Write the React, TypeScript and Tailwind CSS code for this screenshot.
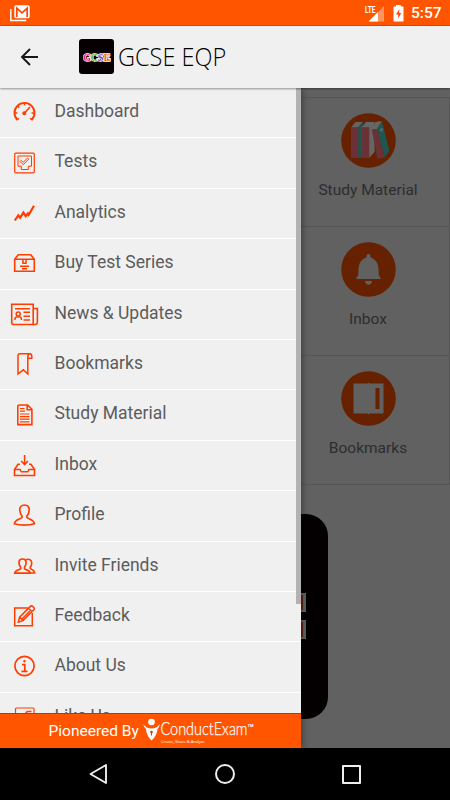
import { ReactNode } from "react";

const menuItems: { label: string; icon: ReactNode }[] = [
  {
    label: "Dashboard",
    icon: (
      <>
        <path d="M7.500 23 A10 10 0 1 1 21.500 23" strokeWidth="1.900" />
        <path d="M7 23l2-1.7M22 23l-2-1.7M4.8 16h2.6M21.6 16h2.6M7.5 9l1.8 1.8M14.5 6v2.5" />
        <path d="M14.5 16l5.5-6" strokeWidth="1.6" />
        <circle cx="14.3" cy="16.2" r="1.3" fill="currentColor" />
      </>
    ),
  },
  {
    label: "Tests",
    icon: (
      <>
        <rect x="4.7" y="5.2" width="19.6" height="19.6" rx="1" strokeWidth="1.2" />
        <path d="M8 18.2V8h13.5v10.2h-3.2v3.3h-7v-3.3z" strokeWidth="1" />
        <path d="M10 13.5l1.2-1.2 2 2 4.3-4.3 1.2 1.2-5.5 5.5z" strokeWidth="1" />
      </>
    ),
  },
  {
    label: "Analytics",
    icon: <path d="M4.8 22.5l3.5-5.2 1.8 2.5 3.3-5.2 2.3 3.6 2.2-2.7.8 1.3 5.3-9" strokeWidth="2.2" />,
  },
  {
    label: "Buy Test Series",
    icon: (
      <>
        <path d="M4.7 11.2l3.6-4.5h12.4l3.6 4.5v12H4.7zM4.7 11.2h19.6" strokeWidth="1.6" />
        <path d="M13 11.2v4h3v-4M10 18.3h9M12 20.8h5" strokeWidth="1.5" />
      </>
    ),
  },
  {
    label: "News & Updates",
    icon: (
      <>
        <path d="M1.7 5.3h21.5v20.2H3.7a2 2 0 0 1-2-2z" strokeWidth="1.6" />
        <path d="M23.2 9.5h4.2v13.5a2.3 2.3 0 0 1-2.3 2.5h-2" strokeWidth="1.6" />
        <path d="M5 9.7h15M13.5 13.3H20M13.5 17.3H20M13.5 21H20M5 21v-1.2q0-2 3.2-2t3.2 2V21" />
        <circle cx="8.2" cy="15" r="2" />
      </>
    ),
  },
  {
    label: "Bookmarks",
    icon: (
      <>
        <path d="M9.8 4.8h10.5q-2.5 0-2.5 3V25l-4.5-4.2L8 25V7q0-2.2 1.8-2.2z" />
        <path d="M20 4.8q1.8.2 1.8 2.6v1.8h-4" />
      </>
    ),
  },
  {
    label: "Study Material",
    icon: (
      <>
        <path d="M9.2 5h8.5l4.2 4.3V24.6H7.8V6.4q0-1.4 1.4-1.4zM17.2 5v4.8h4.7" strokeWidth="1.600" />
        <path d="M10 8.5h4.5M10 11.2h5M10 14h9.5M10 16.6h9.5M10 19.2h9.5M10 21.8h9.5" strokeWidth="1.2" />
      </>
    ),
  },
  {
    label: "Inbox",
    icon: (
      <>
        <path d="M14.6 5v9M11.2 11l3.4 3.5 3.4-3.5" strokeWidth="1.6" />
        <path d="M10 14.2H8l-3.5 5.3v6h20v-6L21 14.2h-2" strokeWidth="1.6" />
        <path d="M4.7 19.4h5.4l1.2 2.4h6.5l1.1-2.4h5.5" />
      </>
    ),
  },
  {
    label: "Profile",
    icon: (
      <path
        d="M14.6 5c-3.200 0-5.200 2.2-4.800 5.2.2 3 1.4 5 2.2 5.8v1.5c-1.7 1.8-7.3 1.8-7.6 6.3 5 1.8 15 1.8 20 0-.3-4.500-5.8-4.500-7.5-6.300V16c1.2-1.2 2.2-3.5 2.3-6 .2-3-1.6-5-4.600-5z"
        strokeWidth="1.7"
      />
    ),
  },
  {
    label: "Invite Friends",
    icon: (
      <>
        <path
          d="M12.5 8c-2.6 0-3.8 1.6-3.5 4 .1 2 .8 3.2 1.6 4v1.8c-1.5 1.2-5.6 1.2-5.9 4.4h15.6c-.3-3.2-4.3-3.2-5.8-4.4V16c1-1 1.5-2.3 1.6-4 .2-2.4-1-4-3.6-4z"
          strokeWidth="1.7"
        />
        <path d="M16 8.8c3-1.5 6 .3 5.7 3.4-.1 1.8-.6 3-1.4 3.9v1.6c1.4 1 4.2 1 4.4 4.3h-4.4" strokeWidth="1.6" />
      </>
    ),
  },
  {
    label: "Feedback",
    icon: (
      <>
        <path d="M18 7H4.7v17.8h17.6V12" />
        <path d="M8.3 21.2l1.3-5L20.4 5.4q1-1 2.2 0l1.3 1.3q1 1 0 2L13 19.6zM9.6 16.3l3.3 3.2M18.6 7.3l3.5 3.4M12 18l8-8" />
      </>
    ),
  },
  {
    label: "About Us",
    icon: (
      <>
        <circle cx="14.5" cy="15" r="9.6" strokeWidth="1.7" />
        <circle cx="14.5" cy="10.2" r=".9" fill="currentColor" strokeWidth=".8" />
        <path d="M12 13.6h2.8v6.3M11.5 20.3h6" strokeWidth="1.7" />
      </>
    ),
  },
  {
    label: "Like Us",
    icon: (
      <>
        <rect x="5.500" y="6" width="18.500" height="18" rx="1" strokeWidth="1.2" />
        <path d="M21.500 9.5h-3q-2.500 0-2.500 2V24M14 15h6" />
      </>
    ),
  },
];

const tiles: { label: string; icon: ReactNode }[] = [
  {
    label: "Study Material",
    icon: (
      <>
        <path d="M10 14.500l4.500-5.500h7.500l-5 5.500z" fill="#646464" />
        <path d="M10 14.500h7.300v30.500H10z" fill="#6a3236" />
        <path d="M17.300 14.500l4.700-5.500v35l-4.700 1z" fill="#1d5652" />
        <path d="M20.500 14.500L25 9h8.500v30l-5.500 6V14.500z" fill="#666" />
        <path d="M20.500 14.500h7.800V45h-7.800z" fill="#6a3236" />
        <path d="M36 16l4.800-8 7.500 29.500-4.600 7z" fill="#1d5652" />
        <path d="M30.700 16.500L34.500 9l6.300-1L36 16z" fill="#666" />
        <path d="M30.700 16.500L36 16l7.700 28.500-7.200 1.500z" fill="#6a3236" />
        <path d="M39 18l1.500-3M40.500 18.500l1.300-3" stroke="#6c7c7a" strokeWidth=".9" />
      </>
    ),
  },
  {
    label: "Inbox",
    icon: (
      <>
        <path
          d="M25.5 14a2 2 0 0 1 4 0v1.5c5.5 1.5 7.8 6.5 8 11.5l.3 6.5 1.6 1.8v1.7H15.5v-1.7l1.7-1.8.3-6.5c.2-5 2.5-10 8-11.5z"
          fill="#616161"
        />
        <path d="M24 39h7q-.5 3.8-3.5 3.8T24 39z" fill="#616161" />
      </>
    ),
  },
  {
    label: "Bookmarks",
    icon: (
      <>
        <path d="M12.5 12.5h14l1-1 1 1h14v30h-14l-1 1-1-1h-14z" fill="#616161" />
        <path d="M34.5 17h4v21h-4z" fill="#662200" />
      </>
    ),
  },
];

function StatusBar() {
  return (
    <div className="flex h-[26px] shrink-0 items-center border-b border-[#ef3f00] bg-[#ff5500] text-white">
      <svg className="ml-[10px] h-[18px] w-5" viewBox="0 0 20 18" fill="none" stroke="currentColor" strokeWidth="1.4">
        <path d="M.8 5v11.5h15.4" />
        <rect x="5" y="2" width="14" height="11.5" rx="1" fill="white" />
        <path d="M6.8 13V4.2l5.2 4.6 5.2-4.6V13" stroke="#ff4600" strokeWidth="1.7" />
      </svg>
      <svg className="ml-[334px] h-[18px] w-[20px]" viewBox="0 0 20 18">
        <path d="M20 2v15.500H5z" fill="#ff9563" />
        <path d="M14 8v9.500H4.500z" fill="white" />
        <text x="1" y="8.500" fill="white" fontFamily="Roboto" fontWeight="700" fontSize="8.500" textLength="10.500" lengthAdjust="spacingAndGlyphs">
          LTE
        </text>
      </svg>
      <svg className="ml-[9px] h-[18px] w-[11px]" viewBox="0 0 11 18">
        <path d="M3 1h5v1.500h2q.5 0 .5.500v14.500H.5V3q0-.5.5-.5h2z" fill="white" />
        <path d="M6.500 5L3 10.500h2.200v4L8.300 9H6z" fill="#ff4600" />
      </svg>
      <span className="relative top-px ml-[7px] text-[15.500px] leading-none font-medium">5:57</span>
    </div>
  );
}

function Header() {
  return (
    <header className="relative z-20 flex h-[62px] shrink-0 items-center bg-[#f0f0f0] pb-px shadow-[0_1px_2px_rgba(0,0,0,0.4)]">
      <svg className="ml-5 h-5 w-5" viewBox="0 0 20 20" fill="none" stroke="#171717" strokeWidth="1.900">
        <path d="M18 10H2M10 2L2 10l8 8" />
      </svg>
      <div className="ml-[39px] flex h-[35px] w-[35px] items-center justify-center rounded-[3px] bg-[#070002]">
        <svg className="h-3 w-7" viewBox="0 0 28 12" fontFamily="Liberation Serif" fontWeight="700" fontSize="10.500" stroke="white" strokeWidth="1.400" paintOrder="stroke">
          <text x="0" y="9.500" fill="#ef1683">G</text>
          <text x="7.500" y="9.500" fill="#62b52e">C</text>
          <text x="14.700" y="9.500" fill="#8c3caa">S</text>
          <text x="20.500" y="9.500" fill="#f36b28">E</text>
        </svg>
      </div>
      <h1 className="ml-1 origin-left scale-x-[0.94] text-[25px] leading-none font-light whitespace-nowrap text-black [font-family:'Open_Sans',sans-serif]">
        GCSE EQP
      </h1>
    </header>
  );
}

function Drawer() {
  return (
    <aside className="relative z-10 flex h-full w-[301px] shrink-0 flex-col bg-[#f0f0f0] shadow-[1px_0_7px_rgba(0,0,0,0.4)]">
      <ul className="min-h-0 flex-1 overflow-hidden">
        {menuItems.map((item) => (
          <li key={item.label} className="flex h-[50.4px] items-center border-b-[1.5px] border-white">
            <svg
              className="relative -top-[0.5px] ml-[10px] h-[30px] w-[30px] shrink-0 text-[#ff3d00]"
              viewBox="0 0 30 30"
              fill="none"
              stroke="currentColor"
              strokeWidth="1.5"
            >
              {item.icon}
            </svg>
            <span className="relative -top-[1.5px] ml-[14.500px] text-[17.500px] text-[#5c5c5c]">{item.label}</span>
          </li>
        ))}
      </ul>
      <div className="absolute top-0 right-0 h-[516px] w-[5px] bg-[#b2b2b2]" />
      <footer className="flex h-[35px] shrink-0 items-center border-t border-[#e82400] bg-[#ff5500] text-white">
        <span className="relative top-px ml-[48.500px] w-[90px] text-[15.500px] whitespace-nowrap">Pioneered By</span>
        <svg className="ml-[3px] h-[30px] w-[112px]" viewBox="0 0 112 30" fill="white">
          <circle cx="9.500" cy="6" r="3.300" />
          <path d="M1 8q3.500 4.500 8.500 4.500T18 8q-1 3.500-2.500 5-.5 7-6 11.500-5-4.500-5.500-11.500Q2 11 1 8z" />
          <circle cx="9.500" cy="16" r="1.300" fill="#d93a00" />
          <path d="M9 16h1v3.500H9z" fill="#d93a00" />
          <text x="18.500" y="19" fontFamily="Lato" fontSize="17.500" fontWeight="300" stroke="white" strokeWidth=".25" textLength="87" lengthAdjust="spacingAndGlyphs">ConductExam</text>
          <text x="105.500" y="10.500" fontFamily="Roboto" fontSize="4" fontWeight="700">TM</text>
          <text x="19" y="26.500" fontFamily="Open Sans" fontSize="4.300" textLength="44">Create, Share &amp; Analyze</text>
        </svg>
      </footer>
    </aside>
  );
}

function Dashboard() {
  return (
    <main className="flex h-full min-w-0 flex-1 flex-col bg-[#616161] pt-[9px]">
      {tiles.map((tile) => (
        <div
          key={tile.label}
          className="flex h-[129px] shrink-0 flex-col items-center border-t border-r border-[#555] pt-[14.500px] pr-[14px]"
        >
          <svg className="h-[55px] w-[55px] shrink-0" viewBox="0 0 55 55">
            <circle cx="27.500" cy="27.500" r="27.300" fill="#662200" />
            {tile.icon}
          </svg>
          <span className="mt-[11px] text-[15.500px] whitespace-nowrap text-[#2d2d2d]">{tile.label}</span>
        </div>
      ))}
      <div className="border-t border-[#555] pt-[28.500px]">
        <div className="flex h-[205px] w-[27px] flex-col justify-center gap-2 rounded-r-[22px] bg-[#040001]">
          <div className="h-[19px] w-[5px] border-y-2 border-r-[3px] border-[#606665] bg-[#632315]" />
          <div className="h-[19px] w-[5px] border-y-2 border-r-[3px] border-[#606665] bg-[#632315]" />
        </div>
      </div>
    </main>
  );
}

function NavBar() {
  return (
    <nav className="flex h-[52px] shrink-0 items-center bg-black">
      <svg className="ml-[88px] h-[22px] w-5" viewBox="0 0 20 22" fill="none" stroke="#eee" strokeWidth="1.900" strokeLinejoin="round">
        <path d="M18 2v18L2.500 11z" />
      </svg>
      <div className="ml-[107px] h-5 w-5 rounded-full border-2 border-[#eee]" />
      <div className="ml-[107px] h-[19px] w-[19px] rounded-[1px] border-2 border-[#eee]" />
    </nav>
  );
}

export default function App() {
  return (
    <div className="flex h-[800px] w-[450px] flex-col overflow-hidden bg-black [font-family:Roboto,sans-serif]">
      <StatusBar />
      <Header />
      <div className="flex min-h-0 flex-1 overflow-hidden">
        <Drawer />
        <Dashboard />
      </div>
      <NavBar />
    </div>
  );
}
